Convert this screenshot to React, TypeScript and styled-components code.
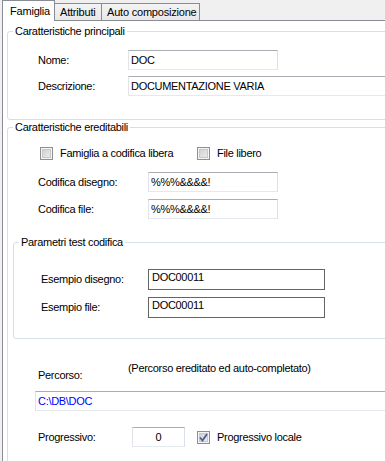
import React from 'react';
import styled, { createGlobalStyle } from 'styled-components';

const GlobalStyle = createGlobalStyle`
  html, body {
    margin: 0;
    padding: 0;
    background: #f0f0f0;
    font-family: "Liberation Sans", Arial, sans-serif;
    font-size: 11px;
    letter-spacing: -0.3px;
    color: #000;
    overflow: hidden;
  }
`;

const Page = styled.div`
  width: 385px;
  height: 461px;
  overflow: hidden;
  display: flex;
  flex-direction: column;
`;

const TabStrip = styled.div`
  display: flex;
  align-items: flex-end;
  height: 21px;
  padding-left: 2px;
`;

const Tab = styled.div<{ $active?: boolean; $w: number }>`
  box-sizing: border-box;
  width: ${({ $w }) => $w}px;
  height: ${({ $active }) => ($active ? 21 : 17)}px;
  margin-bottom: ${({ $active }) => ($active ? -1 : 0)}px;
  margin-left: ${({ $active }) => ($active ? 0 : -1)}px;
  position: relative;
  z-index: ${({ $active }) => ($active ? 2 : 1)};
  border: 1px solid #898c95;
  border-bottom: none;
  background: ${({ $active }) => ($active ? '#fff' : 'linear-gradient(#f3f3f3, #e8e8e8)')};
  display: flex;
  align-items: center;
  padding-left: ${({ $active }) => ($active ? 7 : 5)}px;
  padding-top: ${({ $active }) => ($active ? 0 : 1)}px;
  letter-spacing: -0.2px;
  line-height: 13px;
  white-space: nowrap;
  &:first-child { margin-left: 0; }
`;

const Panel = styled.div`
  flex: 1;
  width: 440px;
  margin-left: 2px;
  background: #fff;
  border-top: 1px solid #898c95;
  border-left: 1px solid #898c95;
  padding-left: 4px;
`;

const Group = styled.fieldset<{ $mt: number }>`
  margin: ${({ $mt }) => $mt}px 0 0 0;
  padding: 0;
  border: 1px solid #d5dfe5;
  border-radius: 3px;
  box-shadow: inset 1px 1px 0 #fff;
  min-width: 0;
`;

const Legend = styled.legend`
  margin-left: 5px;
  padding: 0 2px;
  line-height: 13px;
`;

const GroupBody = styled.div<{ $pt: number; $pb: number; $pl: number }>`
  padding: ${({ $pt }) => $pt}px 0 ${({ $pb }) => $pb}px ${({ $pl }) => $pl}px;
`;

const Row = styled.div<{ $mt?: number; $pl?: number; $top?: boolean }>`
  display: flex;
  align-items: ${({ $top }) => ($top ? 'flex-start' : 'center')};
  margin-top: ${({ $mt }) => $mt ?? 0}px;
  padding-left: ${({ $pl }) => $pl ?? 0}px;
`;

const Label = styled.div<{ $w: number; $mt?: number }>`
  width: ${({ $w }) => $w}px;
  flex: none;
  line-height: 13px;
  margin-top: ${({ $mt }) => $mt ?? 0}px;
`;

const TextBox = styled.div<{ $w?: number; $center?: boolean; $blue?: boolean }>`
  box-sizing: border-box;
  width: ${({ $w }) => ($w ? `${$w}px` : 'auto')};
  flex: ${({ $w }) => ($w ? 'none' : '1')};
  height: 20px;
  border: 1px solid;
  border-color: #abadb3 #dbdfe6 #e3e9ef #e2e3ea;
  background: #fff;
  padding: 0 2px;
  display: flex;
  align-items: center;
  justify-content: ${({ $center }) => ($center ? 'center' : 'flex-start')};
  color: ${({ $blue }) => ($blue ? '#0000ff' : '#000')};
  white-space: nowrap;
  overflow: hidden;
`;

const DarkBox = styled.div`
  box-sizing: border-box;
  width: 177px;
  height: 21px;
  border: 1px solid #646464;
  background: #fff;
  padding: 1px 3px 0;
  line-height: 13px;
`;

const CheckItem = styled.label<{ $w?: number; $ml?: number }>`
  display: flex;
  align-items: center;
  gap: 7px;
  width: ${({ $w }) => ($w ? `${$w}px` : 'auto')};
  margin-left: ${({ $ml }) => $ml ?? 0}px;
  line-height: 13px;
`;

const Box = styled.span`
  box-sizing: border-box;
  width: 13px;
  height: 13px;
  flex: none;
  border: 1px solid #8e8f8f;
  box-shadow: inset 0 0 0 1px #f4f4f4, inset 0 0 0 2px #c9c9c9;
  background-image: linear-gradient(135deg, #cbcbcb, #f1f1f1);
  display: flex;
  align-items: center;
  justify-content: center;
`;

const Hint = styled.div`
  line-height: 13px;
`;

const Check = ({ checked }: { checked?: boolean }) => (
  <Box>
    {checked && (
      <svg width="9" height="9" viewBox="0 0 9 9">
        <path d="M1 4.5 L3.5 7.5 L8 1" fill="none" stroke="#4a5f97" strokeWidth="1.8" />
      </svg>
    )}
  </Box>
);

export default function App() {
  return (
    <Page>
      <GlobalStyle />
      <TabStrip>
        <Tab $active $w={53}>Famiglia</Tab>
        <Tab $w={48}>Attributi</Tab>
        <Tab $w={99}>Auto composizione</Tab>
      </TabStrip>
      <Panel>
        <Group $mt={4}>
          <Legend>Caratteristiche principali</Legend>
          <GroupBody $pt={12} $pb={23} $pl={30}>
            <Row>
              <Label $w={90}>Nome:</Label>
              <TextBox $w={150}>DOC</TextBox>
            </Row>
            <Row $mt={6}>
              <Label $w={90}>Descrizione:</Label>
              <TextBox>DOCUMENTAZIONE VARIA</TextBox>
            </Row>
          </GroupBody>
        </Group>

        <Group $mt={1}>
          <Legend>Caratteristiche ereditabili</Legend>
          <GroupBody $pt={13} $pb={30} $pl={5}>
            <Row $pl={27}>
              <CheckItem $w={157}>
                <Check />
                Famiglia a codifica libera
              </CheckItem>
              <CheckItem>
                <Check />
                File libero
              </CheckItem>
            </Row>
            <Row $mt={12} $pl={25}>
              <Label $w={110}>Codifica disegno:</Label>
              <TextBox $w={130}>%%%&amp;&amp;&amp;&amp;!</TextBox>
            </Row>
            <Row $mt={7} $pl={25}>
              <Label $w={110}>Codifica file:</Label>
              <TextBox $w={130}>%%%&amp;&amp;&amp;&amp;!</TextBox>
            </Row>

            <Group $mt={17}>
              <Legend>Parametri test codifica</Legend>
              <GroupBody $pt={20} $pb={20} $pl={27}>
                <Row>
                  <Label $w={107}>Esempio disegno:</Label>
                  <DarkBox>DOC00011</DarkBox>
                </Row>
                <Row $mt={7}>
                  <Label $w={107}>Esempio file:</Label>
                  <DarkBox>DOC00011</DarkBox>
                </Row>
              </GroupBody>
            </Group>

            <Row $mt={23} $pl={25} $top>
              <Label $w={90} $mt={7}>Percorso:</Label>
              <Hint>(Percorso ereditato ed auto-completato)</Hint>
            </Row>
            <Row $mt={9} $pl={22}>
              <TextBox $blue>C:\DB\DOC</TextBox>
            </Row>
            <Row $mt={16} $pl={25}>
              <Label $w={94}>Progressivo:</Label>
              <TextBox $w={53} $center>0</TextBox>
              <CheckItem $ml={12}>
                <Check checked />
                Progressivo locale
              </CheckItem>
            </Row>
          </GroupBody>
        </Group>
      </Panel>
    </Page>
  );
}
